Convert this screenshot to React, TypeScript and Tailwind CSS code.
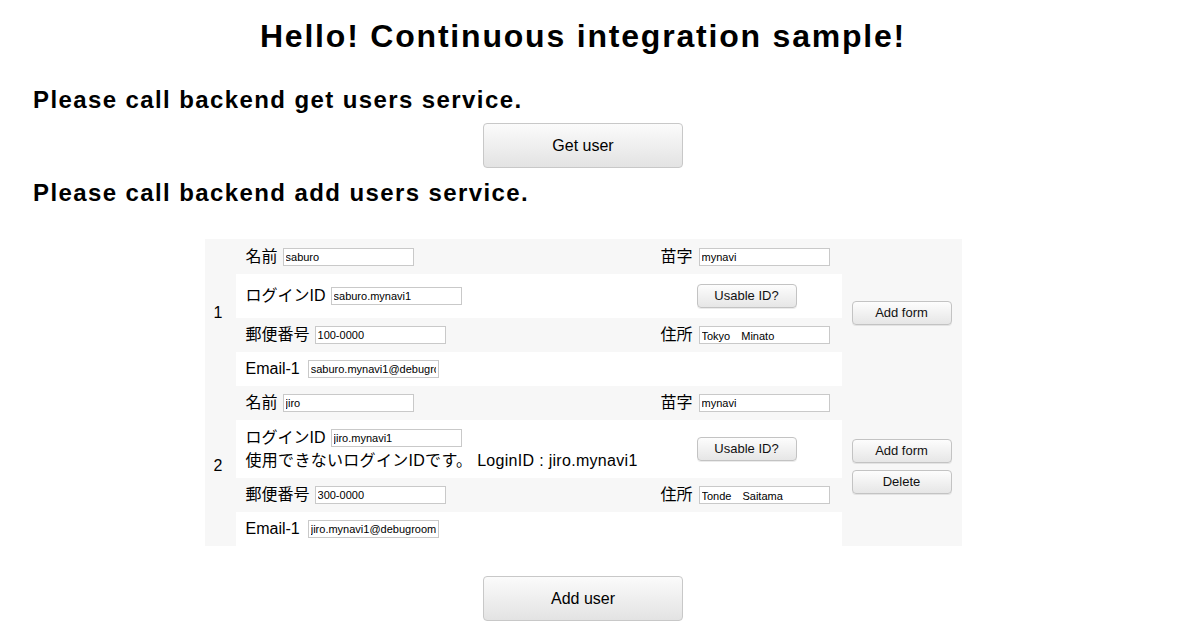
import React from "react";

const font = { fontFamily: '"Liberation Sans", "Noto Sans CJK JP", sans-serif' };

type User = {
  no: number;
  firstName: string;
  lastName: string;
  loginId: string;
  error?: string;
  zip: string;
  address: string;
  email: string;
  canDelete: boolean;
};

const users: User[] = [
  {
    no: 1,
    firstName: "saburo",
    lastName: "mynavi",
    loginId: "saburo.mynavi1",
    zip: "100-0000",
    address: "Tokyo　Minato",
    email: "saburo.mynavi1@debugroom.org",
    canDelete: false,
  },
  {
    no: 2,
    firstName: "jiro",
    lastName: "mynavi",
    loginId: "jiro.mynavi1",
    error: "使用できないログインIDです。 LoginID : jiro.mynavi1",
    zip: "300-0000",
    address: "Tonde　Saitama",
    email: "jiro.mynavi1@debugroom.org",
    canDelete: true,
  },
];

const Field = ({ value }: { value: string }) => (
  <input
    readOnly
    defaultValue={value}
    className="w-[131px] h-[18px] border border-[#c9c9c9] bg-white px-[2px] text-[11px] text-black outline-none"
    style={font}
  />
);

const SmallButton = ({ children }: { children: React.ReactNode }) => (
  <button className="w-[100px] h-[24px] rounded-[4px] border border-[#c3c3c3] bg-linear-to-b from-[#fdfdfd] to-[#e6e6e6] text-[13px] text-[#111] shadow-[0_1px_0_rgba(0,0,0,0.08)]">
    {children}
  </button>
);

const BigButton = ({ children }: { children: React.ReactNode }) => (
  <button className="w-[200px] h-[45px] rounded-[4px] border border-[#c8c8c8] bg-linear-to-b from-[#fbfbfb] to-[#e3e3e3] text-[16px] text-black">
    {children}
  </button>
);

const UserForm = ({ user }: { user: User }) => (
  <div className="flex">
    {/* index */}
    <div className="w-[31px] flex items-center justify-center text-[16px] pr-[4px]">
      {user.no}
    </div>

    {/* fields */}
    <div className="w-[606px] flex flex-col text-[16px]">
      <div
        className={`${user.no === 1 ? "h-[35px]" : "h-[34px]"} flex items-center justify-between pl-[10px] pr-[12px]`}
      >
        <div className="flex items-center gap-[5px]">
          <span>名前</span>
          <Field value={user.firstName} />
        </div>
        <div className="flex items-center gap-[6px]">
          <span>苗字</span>
          <Field value={user.lastName} />
        </div>
      </div>

      {user.error ? (
        <div className="h-[58px] bg-white flex items-center justify-between pl-[10px] pr-[45px]">
          <div className="flex flex-col self-start pt-[8px]">
            <div className="h-[20px] flex items-center gap-[5px]">
              <span>ログインID</span>
              <Field value={user.loginId} />
            </div>
            <div className="mt-[1px] h-[24px] leading-[24px] whitespace-nowrap tracking-[0.3px]">
              {user.error}
            </div>
          </div>
          <SmallButton>Usable ID?</SmallButton>
        </div>
      ) : (
        <div className="h-[44px] bg-white flex items-center justify-between pl-[10px] pr-[45px]">
          <div className="flex items-center gap-[5px]">
            <span>ログインID</span>
            <Field value={user.loginId} />
          </div>
          <SmallButton>Usable ID?</SmallButton>
        </div>
      )}

      <div className="h-[34px] flex items-center justify-between pl-[10px] pr-[12px]">
        <div className="flex items-center gap-[5px]">
          <span>郵便番号</span>
          <Field value={user.zip} />
        </div>
        <div className="flex items-center gap-[6px]">
          <span>住所</span>
          <Field value={user.address} />
        </div>
      </div>

      <div className="h-[34px] bg-white flex items-center pl-[10px] gap-[8px]">
        <span>Email-1</span>
        <Field value={user.email} />
      </div>
    </div>

    {/* actions */}
    <div className="w-[120px] flex flex-col items-center justify-center gap-[7px]">
      <SmallButton>Add form</SmallButton>
      {user.canDelete && <SmallButton>Delete</SmallButton>}
    </div>
  </div>
);

const App = () => {
  return (
    <main className="min-h-[640px] bg-white text-black" style={font}>
      <div className="w-[1166px] flex flex-col items-center">
        <h1 className="mt-[18px] text-[32px] leading-[37px] font-bold tracking-[1.8px]">
          Hello! Continuous integration sample!
        </h1>

        <h2 className="self-start ml-[33px] mt-[31px] text-[24px] leading-[28px] font-bold tracking-[1.4px]">
          Please call backend get users service.
        </h2>
        <div className="mt-[9px]">
          <BigButton>Get user</BigButton>
        </div>

        <h2 className="self-start ml-[33px] mt-[11px] text-[24px] leading-[28px] font-bold tracking-[1.4px]">
          Please call backend add users service.
        </h2>

        {/* user forms */}
        <section className="mt-[32px] w-[757px] bg-[#f7f7f7]">
          {users.map((user) => (
            <UserForm key={user.no} user={user} />
          ))}
        </section>

        <div className="mt-[30px]">
          <BigButton>Add user</BigButton>
        </div>
      </div>
    </main>
  );
};

export default App;
